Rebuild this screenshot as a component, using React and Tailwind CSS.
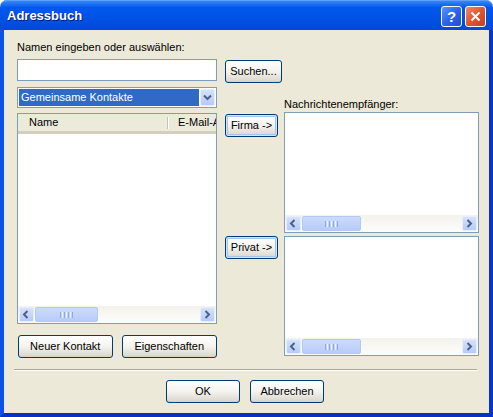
import React from 'react';

const Chevron = ({ dir }) => {
  const paths = {
    left: 'M5.5 1 L2 4.5 L5.5 8',
    right: 'M2.5 1 L6 4.5 L2.5 8',
    down: 'M1 2.5 L4.5 6 L8 2.5',
  };
  return (
    <svg width="9" height="9" viewBox="0 0 9 9">
      <path d={paths[dir]} fill="none" stroke="#4D6185" strokeWidth="2" />
    </svg>
  );
};

const ArrowButton = ({ dir }) => (
  <div className="w-[17px] h-[17px] p-[1px]">
    <div className="w-full h-full rounded-[2px] border border-[#E6EEFC] bg-linear-to-b from-[#D5E2FD] to-[#B7CBF8] flex items-center justify-center">
      <Chevron dir={dir} />
    </div>
  </div>
);

const HScroll = ({ thumb }) => (
  <div className="flex h-[17px] bg-linear-to-b from-[#F3F2EC] to-[#FDFDFB]">
    <ArrowButton dir="left" />
    <div className="flex-1 py-[1px]">
      <div className={`${thumb} h-full rounded-[2px] border border-[#B3C8F5] bg-linear-to-b from-[#CDDBFC] to-[#B8CCF8] flex items-center justify-center gap-[1px]`}>
        <div className="w-[1px] h-[6px] bg-[#8CA9EA]" />
        <div className="w-[1px] h-[6px] bg-[#EEF3FE]" />
        <div className="w-[1px] h-[6px] bg-[#8CA9EA]" />
        <div className="w-[1px] h-[6px] bg-[#EEF3FE]" />
        <div className="w-[1px] h-[6px] bg-[#8CA9EA]" />
        <div className="w-[1px] h-[6px] bg-[#EEF3FE]" />
        <div className="w-[1px] h-[6px] bg-[#8CA9EA]" />
      </div>
    </div>
    <ArrowButton dir="right" />
  </div>
);

const XPButton = ({ className, focus, children }) => (
  <button
    className={`${className} h-[23px] rounded-[3px] border border-[#003C74] bg-linear-to-b from-[#FFFFFF] via-[#F4F3EE] to-[#D9D5CB] text-[11px] leading-none text-black flex items-center justify-center ${
      focus ? 'shadow-[inset_0_0_0_1px_#CEE7FF,inset_0_0_0_2px_#A6C4F0]' : 'shadow-[inset_0_-1px_0_#D6D0C5]'
    }`}
  >
    {children}
  </button>
);

const App = () => {
  return (
    <div className="w-[493px] h-[417px] flex flex-col font-['Liberation_Sans',Arial,sans-serif] text-[11px] text-black select-none">
      {/* title bar */}
      <div className="h-[30px] rounded-t-[7px] bg-linear-to-b from-[#3D8DF7] via-[#0058EE] via-25% to-[#004AD8] flex items-center pl-[7px] pr-[7px] shadow-[inset_0_1px_0_#5FA1FA]">
        <span className="flex-1 text-white font-bold text-[13px] [text-shadow:1px_1px_0_#0A1883] pt-[1px]">Adressbuch</span>
        <div className="flex gap-[3px] mt-[2px]">
          <div className="w-[21px] h-[21px] rounded-[3px] border border-white bg-linear-to-br from-[#5B93F8] via-[#2A65EC] to-[#1F4FD0] flex items-center justify-center">
            <span className="text-white font-bold text-[15px] leading-none">?</span>
          </div>
          <div className="w-[21px] h-[21px] rounded-[3px] border border-white bg-linear-to-br from-[#F0866A] via-[#E2552F] to-[#C2401C] flex items-center justify-center">
            <svg width="11" height="11" viewBox="0 0 11 11">
              <path d="M1.5 1.5 L9.5 9.5 M9.5 1.5 L1.5 9.5" stroke="white" strokeWidth="2" />
            </svg>
          </div>
        </div>
      </div>

      {/* body */}
      <div className="flex-1 bg-[#ECE9D8] border-l-[4px] border-r-[4px] border-b-[4px] border-l-[#0A52E6] border-r-[#0635C8] border-b-[#0632C4] flex flex-col">
        <div className="flex pl-[13px]">
          {/* left column */}
          <div className="w-[200px] flex flex-col pt-[11px]">
            <div className="h-[13px] leading-[13px]">Namen eingeben oder auswählen:</div>
            <div className="mt-[5px] h-[22px] border border-[#7F9DB9] bg-white" />
            <div className="mt-[6px] h-[21px] border border-[#7F9DB9] bg-white flex p-[1px] gap-[1px]">
              <div className="flex-1 bg-[#316AC5] text-white flex items-center pl-[2px]">Gemeinsame Kontakte</div>
              <div className="w-[15px] rounded-[2px] border border-[#E6EEFC] bg-linear-to-b from-[#D5E2FD] to-[#B7CBF8] flex items-center justify-center">
                <Chevron dir="down" />
              </div>
            </div>
            <div className="mt-[5px] h-[211px] border border-[#7F9DB9] bg-white flex flex-col">
              <div className="h-[20px] bg-[#EBEADB] border-b-[3px] border-b-[#D3CFBE] flex items-center">
                <div className="w-[149px] shrink-0 pl-[11px] h-full flex items-center">Name</div>
                <div className="w-[1px] shrink-0 h-[12px] bg-[#C7C5B2] shadow-[1px_0_0_#FFFFFF]" />
                <div className="flex-1 min-w-0 pl-[10px] overflow-hidden whitespace-nowrap">E-Mail-Adresse</div>
              </div>
              <div className="flex-1" />
              <HScroll thumb="w-[63px]" />
            </div>
            <div className="mt-[11px] flex">
              <XPButton className="ml-[1px] w-[96px]">Neuer Kontakt</XPButton>
              <XPButton className="ml-[9px] w-[97px]">Eigenschaften</XPButton>
            </div>
          </div>

          {/* middle column */}
          <div className="w-[59px] ml-[8px] flex flex-col">
            <XPButton className="mt-[30px] w-[57px]">Suchen...</XPButton>
            <XPButton className="mt-[31px] w-[53px]" focus>Firma -&gt;</XPButton>
            <XPButton className="mt-[99px] w-[53px]" focus>Privat -&gt;</XPButton>
          </div>

          {/* right column */}
          <div className="w-[195px] flex flex-col pt-[68px]">
            <div className="h-[13px] leading-[13px]">Nachrichtenempfänger:</div>
            <div className="mt-[1px] h-[121px] border border-[#7F9DB9] bg-white flex flex-col">
              <div className="flex-1" />
              <HScroll thumb="w-[59px]" />
            </div>
            <div className="mt-[3px] h-[120px] border border-[#7F9DB9] bg-white flex flex-col">
              <div className="flex-1" />
              <HScroll thumb="w-[59px]" />
            </div>
          </div>
        </div>

        {/* separator */}
        <div className="mt-[11px] ml-[10px] mr-[12px] h-[2px] border-t border-t-[#ACA899] border-b border-b-white" />

        <div className="mt-[9px] flex pl-[162px]">
          <XPButton className="w-[74px]">OK</XPButton>
          <XPButton className="ml-[10px] w-[74px]">Abbrechen</XPButton>
        </div>
      </div>
    </div>
  );
};

export default App;
